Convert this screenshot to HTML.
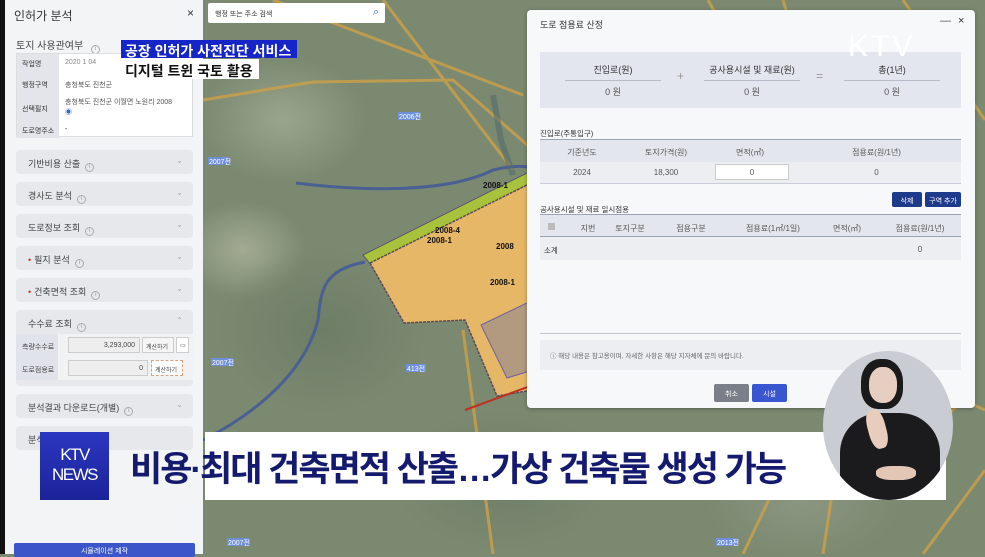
<!DOCTYPE html>
<html><head><meta charset="utf-8">
<style>
*{margin:0;padding:0;box-sizing:border-box}
body{width:985px;height:554px;overflow:hidden;position:relative;font-family:"Liberation Sans","Noto Sans CJK KR",sans-serif;background:#7c8a72;color:#333}
.abs{position:absolute}
#map{left:203px;top:0;width:782px;height:554px;background:
radial-gradient(ellipse 120px 90px at 80px 120px,#9aa58c 0,transparent 70%),
radial-gradient(ellipse 150px 120px at 120px 330px,#6e7d66 0,transparent 70%),
radial-gradient(ellipse 90px 70px at 40px 250px,#a3ab92 0,transparent 70%),
radial-gradient(ellipse 160px 100px at 300px 480px,#6f7e67 0,transparent 70%),
radial-gradient(ellipse 140px 90px at 600px 500px,#8b9680 0,transparent 70%),
#7b8971}
#panel{left:0;top:0;width:203px;height:554px;background:#f3f4f6}
.card{position:absolute;left:16px;width:177px;height:24px;background:#e7e8eb;border-radius:4px;font-size:9px;color:#444;padding:7px 0 0 12px}
.card .ch{position:absolute;right:10px;top:6px;color:#aaa;font-size:8px}
.i{display:inline-block;width:9px;height:9px;border:1px solid #aaa;border-radius:50%;font-size:6px;line-height:7px;text-align:center;color:#999;margin-left:5px;vertical-align:-1px}
.dot{color:#d33;margin-right:3px}
#dlg{left:527px;top:10px;width:448px;height:398px;background:#f7f8fa;border-radius:4px;box-shadow:0 1px 4px rgba(0,0,0,.3)}
.t{font-size:8px;color:#555;text-align:center}
.btn{position:absolute;font-size:7px;color:#fff;text-align:center;border-radius:2px}
</style></head><body>
<div id="map" class="abs">
<svg width="782" height="554" style="position:absolute;left:0;top:0">
<g stroke="#c9a04a" stroke-width="3" fill="none" opacity=".85">
<path d="M0 100 L110 82 L250 80 L330 150"/>
<path d="M70 0 L320 95"/>
<path d="M505 0 L583 140"/>
<path d="M580 0 L640 200"/>
<path d="M700 0 L782 120"/>
<path d="M180 0 L310 170"/>
<path d="M260 330 L290 554"/>
<path d="M640 420 L620 554"/>
<path d="M700 460 L760 400 L782 410"/>
<path d="M720 554 L782 470"/>
<path d="M540 554 L580 470 L660 440 L740 430"/>
</g>
<path d="M93 183 C150 190 240 195 290 170 C330 160 350 170 365 200" stroke="#4a5f92" stroke-width="3" fill="none"/>
<path d="M162 262 C120 270 118 290 115 320 C100 380 40 420 0 440" stroke="#4a5f92" stroke-width="3" fill="none"/>
<polygon points="160,255 330,170 330,182 168,265" fill="#a9c23c" stroke="#556" stroke-width="1"/>
<polygon points="167,263 330,182 330,390 294,396 262,320 201,323" fill="#e6b766" stroke="#5a4a5a" stroke-width="1.5" stroke-dasharray="3 1"/>
<polygon points="278,325 330,300 330,370 304,378" fill="#b19a80" stroke="#7060a0" stroke-width="1"/>
<path d="M262 410 L330 385" stroke="#c03020" stroke-width="2"/>
<path d="M290 95 L298 140 L310 175" stroke="#556a6a" stroke-width="6" fill="none" opacity=".6"/>
<g font-size="7" fill="#fff" font-family="Liberation Sans">
<rect x="5" y="157" width="22" height="8" fill="#6f8fd8"/><text x="6" y="164">2007전</text>
<rect x="8" y="358" width="22" height="8" fill="#6f8fd8"/><text x="9" y="365">2007전</text>
<rect x="195" y="112" width="22" height="8" fill="#6f8fd8"/><text x="196" y="119">2006전</text>
<rect x="203" y="364" width="20" height="8" fill="#6f8fd8"/><text x="204" y="371">413전</text>
<rect x="24" y="538" width="22" height="8" fill="#6f8fd8"/><text x="25" y="545">2007전</text>
<rect x="700" y="34" width="22" height="8" fill="#6f8fd8"/><text x="701" y="41">2006</text>
<rect x="513" y="538" width="22" height="8" fill="#6f8fd8"/><text x="514" y="545">2013전</text>
</g>
<g font-size="8" fill="#111" font-weight="bold" font-family="Liberation Sans">
<text x="232" y="233">2008-4</text><text x="224" y="243">2008-1</text><text x="280" y="188">2008-1</text><text x="293" y="249">2008</text><text x="287" y="285">2008-1</text>
</g>
</svg>
</div>
<div class="abs" style="left:208px;top:3px;width:177px;height:20px;background:#fff;border-radius:2px;font-size:7px;padding:6px 0 0 7px;color:#333">행정 또는 주소 검색<span style="position:absolute;right:6px;top:3px;color:#3a6bc0;font-size:11px">⌕</span></div>

<div id="panel" class="abs">
<div class="abs" style="left:0;top:0;width:5px;height:554px;background:#111"></div>
<div class="abs" style="left:14px;top:7px;font-size:12px;color:#333">인허가 분석</div>
<div class="abs" style="left:187px;top:6px;font-size:12px;color:#333">×</div>
<div class="abs" style="left:16px;top:37px;font-size:10px;color:#444">토지 사용관여부 <span class="i">i</span></div>
<div class="abs" style="left:16px;top:53px;width:177px;height:84px;background:#fff;border:1px solid #ddd">
<div class="abs" style="left:0;top:0;width:42px;height:84px;background:#e3e5ea"></div>
<div class="abs" style="left:5px;top:5px;font-size:7px">작업명</div><div class="abs" style="left:48px;top:5px;font-size:7px;color:#888">2020 1 04</div>
<div class="abs" style="left:5px;top:26px;font-size:7px">행정구역</div><div class="abs" style="left:48px;top:26px;font-size:7px;color:#555">충청북도 진천군</div>
<div class="abs" style="left:5px;top:50px;font-size:7px">선택필지</div><div class="abs" style="left:48px;top:43px;font-size:7px;color:#555">충청북도 진천군 이월면 노원리 2008<br><span style="color:#3a6bc0">◉</span></div>
<div class="abs" style="left:5px;top:72px;font-size:7px">도로명주소</div><div class="abs" style="left:48px;top:72px;font-size:7px">-</div>
</div>
<div class="card" style="top:150px">기반비용 산출<span class="i">i</span><span class="ch">⌄</span></div>
<div class="card" style="top:182px">경사도 분석<span class="i">i</span><span class="ch">⌄</span></div>
<div class="card" style="top:214px">도로정보 조회<span class="i">i</span><span class="ch">⌄</span></div>
<div class="card" style="top:246px"><span class="dot">•</span>필지 분석<span class="i">i</span><span class="ch">⌄</span></div>
<div class="card" style="top:278px"><span class="dot">•</span>건축면적 조회<span class="i">i</span><span class="ch">⌄</span></div>
<div class="card" style="top:310px;height:76px">수수료 조회<span class="i">i</span><span class="ch">⌃</span>
<div class="abs" style="left:0;top:24px;width:177px;height:46px;background:#f1f2f4"></div>
<div class="abs" style="left:0;top:24px;width:42px;height:46px;background:#e1e3ea"></div>
<div class="abs" style="left:6px;top:32px;font-size:7px">측량수수료</div>
<div class="abs" style="left:52px;top:27px;width:72px;height:16px;background:#eee;border:1px solid #ccc;font-size:7px;text-align:right;padding:4px 4px 0 0">3,293,000</div>
<div class="abs" style="left:126px;top:27px;width:32px;height:16px;background:#f5f5f5;border:1px solid #ccc;font-size:6px;padding:4px 0 0 3px">계산하기</div>
<div class="abs" style="left:160px;top:27px;width:13px;height:16px;background:#fff;border:1px solid #ccc;font-size:6px;padding:4px 0 0 3px">▭</div>
<div class="abs" style="left:6px;top:55px;font-size:7px">도로점용료</div>
<div class="abs" style="left:52px;top:50px;width:80px;height:16px;background:#eee;border:1px solid #ccc;font-size:7px;text-align:right;padding:4px 4px 0 0">0</div>
<div class="abs" style="left:135px;top:50px;width:32px;height:16px;background:#fff;border:1px dashed #d9a080;font-size:6px;padding:4px 0 0 3px">계산하기</div>
</div>
<div class="card" style="top:394px">분석결과 다운로드(개별)<span class="i">i</span><span class="ch">⌄</span></div>
<div class="card" style="top:426px">분석</div>
<div class="abs" style="left:14px;top:543px;width:181px;height:14px;background:#3a56c8;border-radius:2px;font-size:7px;color:#fff;text-align:center;padding-top:3px">시뮬레이션 제작</div>
</div>

<div class="abs" style="left:121px;top:40px;width:176px;height:18px;background:#1525c8;color:#fff;font-size:14px;font-weight:bold;padding:1px 0 0 4px;white-space:nowrap">공장 인허가 사전진단 서비스</div>
<div class="abs" style="left:121px;top:59px;width:138px;height:20px;background:#fff;color:#111;font-size:14px;font-weight:bold;padding:2px 0 0 4px;white-space:nowrap">디지털 트윈 국토 활용</div>

<div id="dlg" class="abs">
<div class="abs" style="left:13px;top:8px;font-size:9px;color:#333">도로 점용료 산정</div>
<div class="abs" style="left:413px;top:5px;font-size:11px;color:#555">—</div>
<div class="abs" style="left:431px;top:5px;font-size:11px;color:#333">×</div>
<div class="abs" style="left:13px;top:42px;width:421px;height:56px;background:#e3e6ee"></div>
<div class="abs t" style="left:38px;top:53px;width:96px;font-size:9px;color:#333;border-bottom:1px solid #b8bcc8;padding-bottom:4px">진입로(원)</div>
<div class="abs t" style="left:38px;top:75px;width:96px;font-size:9px">0 원</div>
<div class="abs" style="left:150px;top:59px;font-size:12px;color:#999">+</div>
<div class="abs t" style="left:177px;top:53px;width:96px;font-size:9px;color:#333;border-bottom:1px solid #b8bcc8;padding-bottom:4px">공사용시설 및 재료(원)</div>
<div class="abs t" style="left:177px;top:75px;width:96px;font-size:9px">0 원</div>
<div class="abs" style="left:289px;top:59px;font-size:12px;color:#999">=</div>
<div class="abs t" style="left:317px;top:53px;width:96px;font-size:9px;color:#333;border-bottom:1px solid #b8bcc8;padding-bottom:4px">총(1년)</div>
<div class="abs t" style="left:317px;top:75px;width:96px;font-size:9px">0 원</div>
<div class="abs" style="left:321px;top:20px;font-size:30px;color:#fff;letter-spacing:3px">KTV</div>
<div class="abs" style="left:13px;top:118px;font-size:7.5px">진입로(주통입구)</div>
<div class="abs" style="left:13px;top:129px;width:421px;height:45px;background:#eceef2;border-top:1.5px solid #9aa3b8;border-bottom:1px solid #ccd"></div>
<div class="abs" style="left:13px;top:130px;width:421px;height:22px;background:#e3e6ec"></div>
<div class="abs t" style="left:13px;top:137px;width:84px">기준년도</div>
<div class="abs t" style="left:97px;top:137px;width:84px">토지가격(원)</div>
<div class="abs t" style="left:181px;top:137px;width:84px">면적(㎡)</div>
<div class="abs t" style="left:265px;top:137px;width:169px">점용료(원/1년)</div>
<div class="abs t" style="left:13px;top:158px;width:84px">2024</div>
<div class="abs t" style="left:97px;top:158px;width:84px">18,300</div>
<div class="abs t" style="left:188px;top:154px;width:74px;height:16px;background:#fff;border:1px solid #ccc;padding-top:3px">0</div>
<div class="abs t" style="left:265px;top:158px;width:169px">0</div>
<div class="abs" style="left:13px;top:194px;font-size:7.5px">공사용시설 및 재료 일시점용</div>
<div class="btn" style="left:365px;top:182px;width:30px;height:15px;background:#1f3a8a;padding-top:4px">삭제</div>
<div class="btn" style="left:398px;top:182px;width:36px;height:15px;background:#1f3a8a;padding-top:4px">구역 추가</div>
<div class="abs" style="left:13px;top:204px;width:421px;height:46px;background:#eceef2;border-top:1.5px solid #9aa3b8"></div>
<div class="abs" style="left:13px;top:205px;width:421px;height:22px;background:#e3e6ec;border-bottom:1.5px solid #9aa3b8"></div>
<div class="abs" style="left:21px;top:213px;width:7px;height:7px;background:#bbb"></div>
<div class="abs t" style="left:40px;top:213px;width:42px">지번</div>
<div class="abs t" style="left:82px;top:213px;width:42px">토지구분</div>
<div class="abs t" style="left:124px;top:213px;width:80px">점용구분</div>
<div class="abs t" style="left:204px;top:213px;width:84px">점용료(1㎡/1일)</div>
<div class="abs t" style="left:288px;top:213px;width:64px">면적(㎡)</div>
<div class="abs t" style="left:352px;top:213px;width:82px">점용료(원/1년)</div>
<div class="abs" style="left:17px;top:235px;font-size:7.5px">소계</div>
<div class="abs t" style="left:352px;top:235px;width:82px">0</div>
<div class="abs" style="left:13px;top:323px;width:421px;height:1px;background:#c0c4cc"></div>
<div class="abs" style="left:13px;top:330px;width:421px;height:30px;background:#eceef2;font-size:6.5px;color:#666;padding:10px 0 0 10px">ⓘ 해당 내용은 참고용이며, 자세한 사항은 해당 지자체에 문의 바랍니다.</div>
<div class="btn" style="left:187px;top:374px;width:35px;height:18px;background:#7a7f88;padding-top:5px">취소</div>
<div class="btn" style="left:225px;top:374px;width:35px;height:18px;background:#3a55d0;padding-top:5px">시설</div>
</div>

<div class="abs" style="left:205px;top:432px;width:741px;height:68px;background:#fff"></div>
<div class="abs" style="left:40px;top:432px;width:69px;height:68px;background:linear-gradient(#2a36c0,#1c2399);color:#fff;font-size:17px;line-height:20px;text-align:center;padding-top:13px;letter-spacing:-1.5px">KTV<br>NEWS</div>
<div class="abs" style="left:130px;top:441px;font-size:35px;font-weight:bold;color:#141a6e;white-space:nowrap;letter-spacing:-2px">비용·최대 건축면적 산출…가상 건축물 생성 가능</div>

<div class="abs" style="left:823px;top:351px;width:130px;height:149px;border-radius:50%;background:#c9ccd3;overflow:hidden">
<div class="abs" style="left:38px;top:8px;width:42px;height:50px;border-radius:45% 45% 40% 40%;background:#1a1a1a"></div>
<div class="abs" style="left:46px;top:16px;width:28px;height:36px;border-radius:45%;background:#e6cfc0"></div>
<div class="abs" style="left:17px;top:62px;width:100px;height:100px;border-radius:40% 40% 0 0;background:#1b1b1d"></div>
<div class="abs" style="left:45px;top:58px;width:18px;height:40px;border-radius:40%;background:#e8cdbd;transform:rotate(-15deg)"></div>
<div class="abs" style="left:53px;top:115px;width:40px;height:14px;border-radius:40%;background:#e3c6b5"></div>
</div>
</body></html>
